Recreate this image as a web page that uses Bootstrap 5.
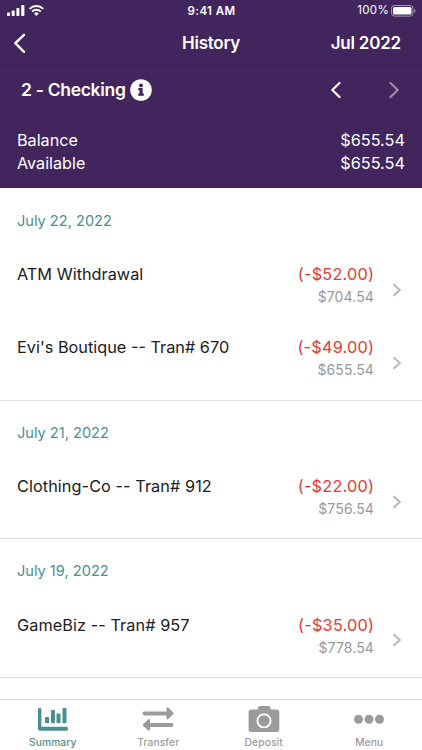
<!DOCTYPE html>
<html lang="en">
<head>
<meta charset="utf-8">
<meta name="viewport" content="width=device-width, initial-scale=1">
<title>History</title>
<link href="https://cdn.jsdelivr.net/npm/bootstrap@5.3.0/dist/css/bootstrap.min.css" rel="stylesheet">
<style>
body{font-family:Inter,"Liberation Sans",sans-serif;color:#202020;background:#fff}
svg{display:block;flex:none}
.screen{height:750px}
.top{background:#41255c;color:#fff;height:188px;flex:none}
.status{height:22px;padding:0 6px 0 7px}
.clock{font-size:11.5px;font-weight:600;letter-spacing:.4px;padding-top:1px}
.power{font-size:11.5px;gap:2px;letter-spacing:.3px}
.bar{height:44px;border-bottom:1px solid #38204f;padding:0 21px 0 13px;font-size:17px;font-weight:600;letter-spacing:-.25px}
.title{position:relative;left:4px}
.month{letter-spacing:-.2px}
.acct{height:44px;border-bottom:1px solid #38204f;padding:4px 23px 0 21px;font-size:17.5px;font-weight:600;letter-spacing:-.3px}
.acct-name{padding-top:2px}
.info{margin-left:4px}
.next{margin-left:48px}
.sums{padding:19px 17px 0;font-size:16.2px;line-height:23px}
.usd{font-size:16.3px}
.day{border-bottom:1px solid #dedede}
.date{height:65px;padding:20px 17px 0;font-size:14.6px;line-height:24px;color:#4b8f91}
.tran{height:73px;padding:9px 20px 0 17px;font-size:16.3px}
.day:first-child .date{padding-top:21px}
.day:first-child .tran{height:74px}
.day:first-child .tran + .tran{height:73px;padding-top:8px}
.day:nth-child(2) .tran{height:72px;padding-top:8px}
.l1{line-height:24px}
.fit{letter-spacing:.06px}
.amt{color:#e53935;letter-spacing:.22px;margin-right:-.22px}
.bal{font-size:14px;line-height:21px;color:#999;letter-spacing:.12px}
.chev{margin:21px 0 0 18px}
.day:last-child .chev{margin-top:20px}
.tabs{height:51px;border-top:1px solid #dedede;background:#fff;color:#9b9b9b;font-size:10.2px;font-weight:500;letter-spacing:.15px;flex:none}
.tabs .on{color:#4b8f91}
.ico{height:35px}
.tabs span{line-height:14px}
</style>
<script src="https://cdn.jsdelivr.net/npm/bootstrap@5.3.0/dist/js/bootstrap.bundle.min.js"></script>
</head>
<body>
<div class="screen d-flex flex-column overflow-hidden">
<header class="top">
 <div class="status row g-0 align-items-center">
  <div class="col d-flex align-items-center">
   <svg width="38" height="13" viewBox="0 0 38 13" fill="#fff"><rect x="0" y="7.5" width="3" height="3.5" rx=".8"/><rect x="4.7" y="5.5" width="3" height="5.5" rx=".8"/><rect x="9.4" y="3" width="3" height="8" rx=".8"/><rect x="14.2" y="0" width="3.2" height="11" rx=".8"/><g fill="none" stroke="#fff" stroke-width="2"><path d="M22.6 3.9a9.7 9.7 0 0 1 13.6 0"/><path d="M25.1 6.6a6.2 6.2 0 0 1 8.6 0"/></g><path d="M29.4 11l-2.3-2.500a3.200 3.200 0 0 1 4.600 0z"/></svg>
  </div>
  <div class="col-auto clock">9:41 AM</div>
  <div class="col d-flex align-items-center justify-content-end power"><span>100%</span>
   <svg width="25" height="12" viewBox="0 0 25 12"><rect x=".5" y=".5" width="21.5" height="10.6" rx="2.8" fill="none" stroke="#a597b1"/><rect x="2" y="2" width="18.5" height="7.6" rx="1.5" fill="#fff"/><path d="M23.2 4v4q1.3-.5 1.3-2t-1.3-2" fill="#a597b1"/></svg>
  </div>
 </div>
 <div class="bar row g-0 align-items-center">
  <div class="col"><svg width="14" height="22" viewBox="0 0 14 22" fill="none" stroke="#fff" stroke-width="2.4" stroke-linecap="round" stroke-linejoin="round"><path d="M11 1.800L2.300 10.200l8.700 8.600"/></svg></div>
  <div class="col-auto title">History</div>
  <div class="col text-end month">Jul 2022</div>
 </div>
 <div class="acct d-flex align-items-center">
  <span class="acct-name">2 - Checking</span>
  <svg class="info" width="22" height="22" viewBox="0 0 22 22"><circle cx="11" cy="11" r="10.8" fill="#fff"/><circle cx="11" cy="6.4" r="1.9" fill="#41255c"/><path d="M8.3 9.1h4.3v5.4h1.2v2.2H8.2v-2.2h1.3v-3.2H8.3z" fill="#41255c"/></svg>
  <svg class="ms-auto" width="10" height="18" viewBox="0 0 10 18" fill="none" stroke="#fff" stroke-width="2.2" stroke-linecap="round" stroke-linejoin="round"><path d="M8.5 2L1.3 9l7.2 7"/></svg>
  <svg class="next" width="10" height="18" viewBox="0 0 10 18" fill="none" stroke="#9c8bab" stroke-width="2.2" stroke-linecap="round" stroke-linejoin="round"><path d="M1.5 2l7.2 7-7.2 7"/></svg>
 </div>
 <div class="sums">
  <div class="d-flex justify-content-between"><span>Balance</span><span class="usd">$655.54</span></div>
  <div class="d-flex justify-content-between"><span>Available</span><span class="usd">$655.54</span></div>
 </div>
</header>
<main class="flex-grow-1 overflow-hidden">
 <section class="day">
  <div class="date">July 22, 2022</div>
  <div class="tran d-flex"><div class="l1">ATM Withdrawal</div><div class="ms-auto text-end"><div class="l1 amt">(-$52.00)</div><div class="bal">$704.54</div></div><svg class="chev" width="10" height="14" viewBox="0 0 10 14" fill="none" stroke="#b9b9b9" stroke-width="2"><path d="M1.5 1.3L7.8 7l-6.3 5.7"/></svg></div>
  <div class="tran d-flex"><div class="l1">Evi's Boutique -- Tran# 670</div><div class="ms-auto text-end"><div class="l1 amt">(-$49.00)</div><div class="bal">$655.54</div></div><svg class="chev" width="10" height="14" viewBox="0 0 10 14" fill="none" stroke="#b9b9b9" stroke-width="2"><path d="M1.5 1.3L7.8 7l-6.3 5.7"/></svg></div>
 </section>
 <section class="day">
  <div class="date">July 21, 2022</div>
  <div class="tran d-flex"><div class="l1 fit">Clothing-Co -- Tran# 912</div><div class="ms-auto text-end"><div class="l1 amt">(-$22.00)</div><div class="bal">$756.54</div></div><svg class="chev" width="10" height="14" viewBox="0 0 10 14" fill="none" stroke="#b9b9b9" stroke-width="2"><path d="M1.5 1.3L7.8 7l-6.3 5.7"/></svg></div>
 </section>
 <section class="day">
  <div class="date">July 19, 2022</div>
  <div class="tran d-flex"><div class="l1 fit">GameBiz -- Tran# 957</div><div class="ms-auto text-end"><div class="l1 amt">(-$35.00)</div><div class="bal">$778.54</div></div><svg class="chev" width="10" height="14" viewBox="0 0 10 14" fill="none" stroke="#b9b9b9" stroke-width="2"><path d="M1.5 1.3L7.8 7l-6.3 5.7"/></svg></div>
 </section>
</main>
<nav class="tabs row g-0 text-center">
 <div class="col on"><div class="ico d-flex justify-content-center"><svg width="32" height="35" viewBox="0 0 32 35" fill="currentColor"><path d="M1 9.400q0-1.400 1.700-1.400t1.700 1.400v17.400h25.400q1.200 0 1.200 1.900t-1.200 2H2.800Q1 30.700 1 29z"/><rect x="8" y="17" width="4" height="6.300" rx="1"/><rect x="14" y="10" width="4" height="13.300" rx="1"/><rect x="19.500" y="13.600" width="4" height="9.700" rx="1"/><rect x="25.500" y="8" width="4" height="15.300" rx="1"/></svg></div><span class="d-block">Summary</span></div>
 <div class="col"><div class="ico d-flex justify-content-center"><svg width="32" height="35" viewBox="0 0 32 35" fill="currentColor"><path d="M2 11.500h22.500V8.300q.3-1.500 1.700-.7l5 4.900q.8.900 0 1.800l-5 4.600q-1.300.7-1.700-.7v-2.800H2q-1.400-.2-1.400-1.950T2 11.500zM30 23H8v-3.100q-.3-1.500-1.700-.7l-5 4.900q-.8.900 0 1.800l5 4.600q1.300.7 1.700-.7v-2.900h22q1.400-.2 1.400-1.950T30 23z"/></svg></div><span class="d-block">Transfer</span></div>
 <div class="col"><div class="ico d-flex justify-content-center"><svg width="32" height="35" viewBox="0 0 32 35" fill="currentColor"><path d="M3.500 9.500h5.800l1-2.300Q11 6 12.300 6h8q1.300 0 1.900 1.200l1 2.300h5.300Q31.300 9.500 31.300 12v17.500q0 2.500-2.800 2.500h-25Q.6 32 .6 29.500V12q0-2.500 2.900-2.500z"/><circle cx="16" cy="20.800" r="6.600" fill="none" stroke="#fff" stroke-width="1.900"/></svg></div><span class="d-block">Deposit</span></div>
 <div class="col"><div class="ico d-flex justify-content-center"><svg width="32" height="35" viewBox="0 0 32 35" fill="currentColor"><circle cx="5.500" cy="19.200" r="4.500"/><circle cx="16" cy="19.200" r="4.500"/><circle cx="26.500" cy="19.200" r="4.500"/></svg></div><span class="d-block">Menu</span></div>
</nav>
</div>
</body>
</html>
